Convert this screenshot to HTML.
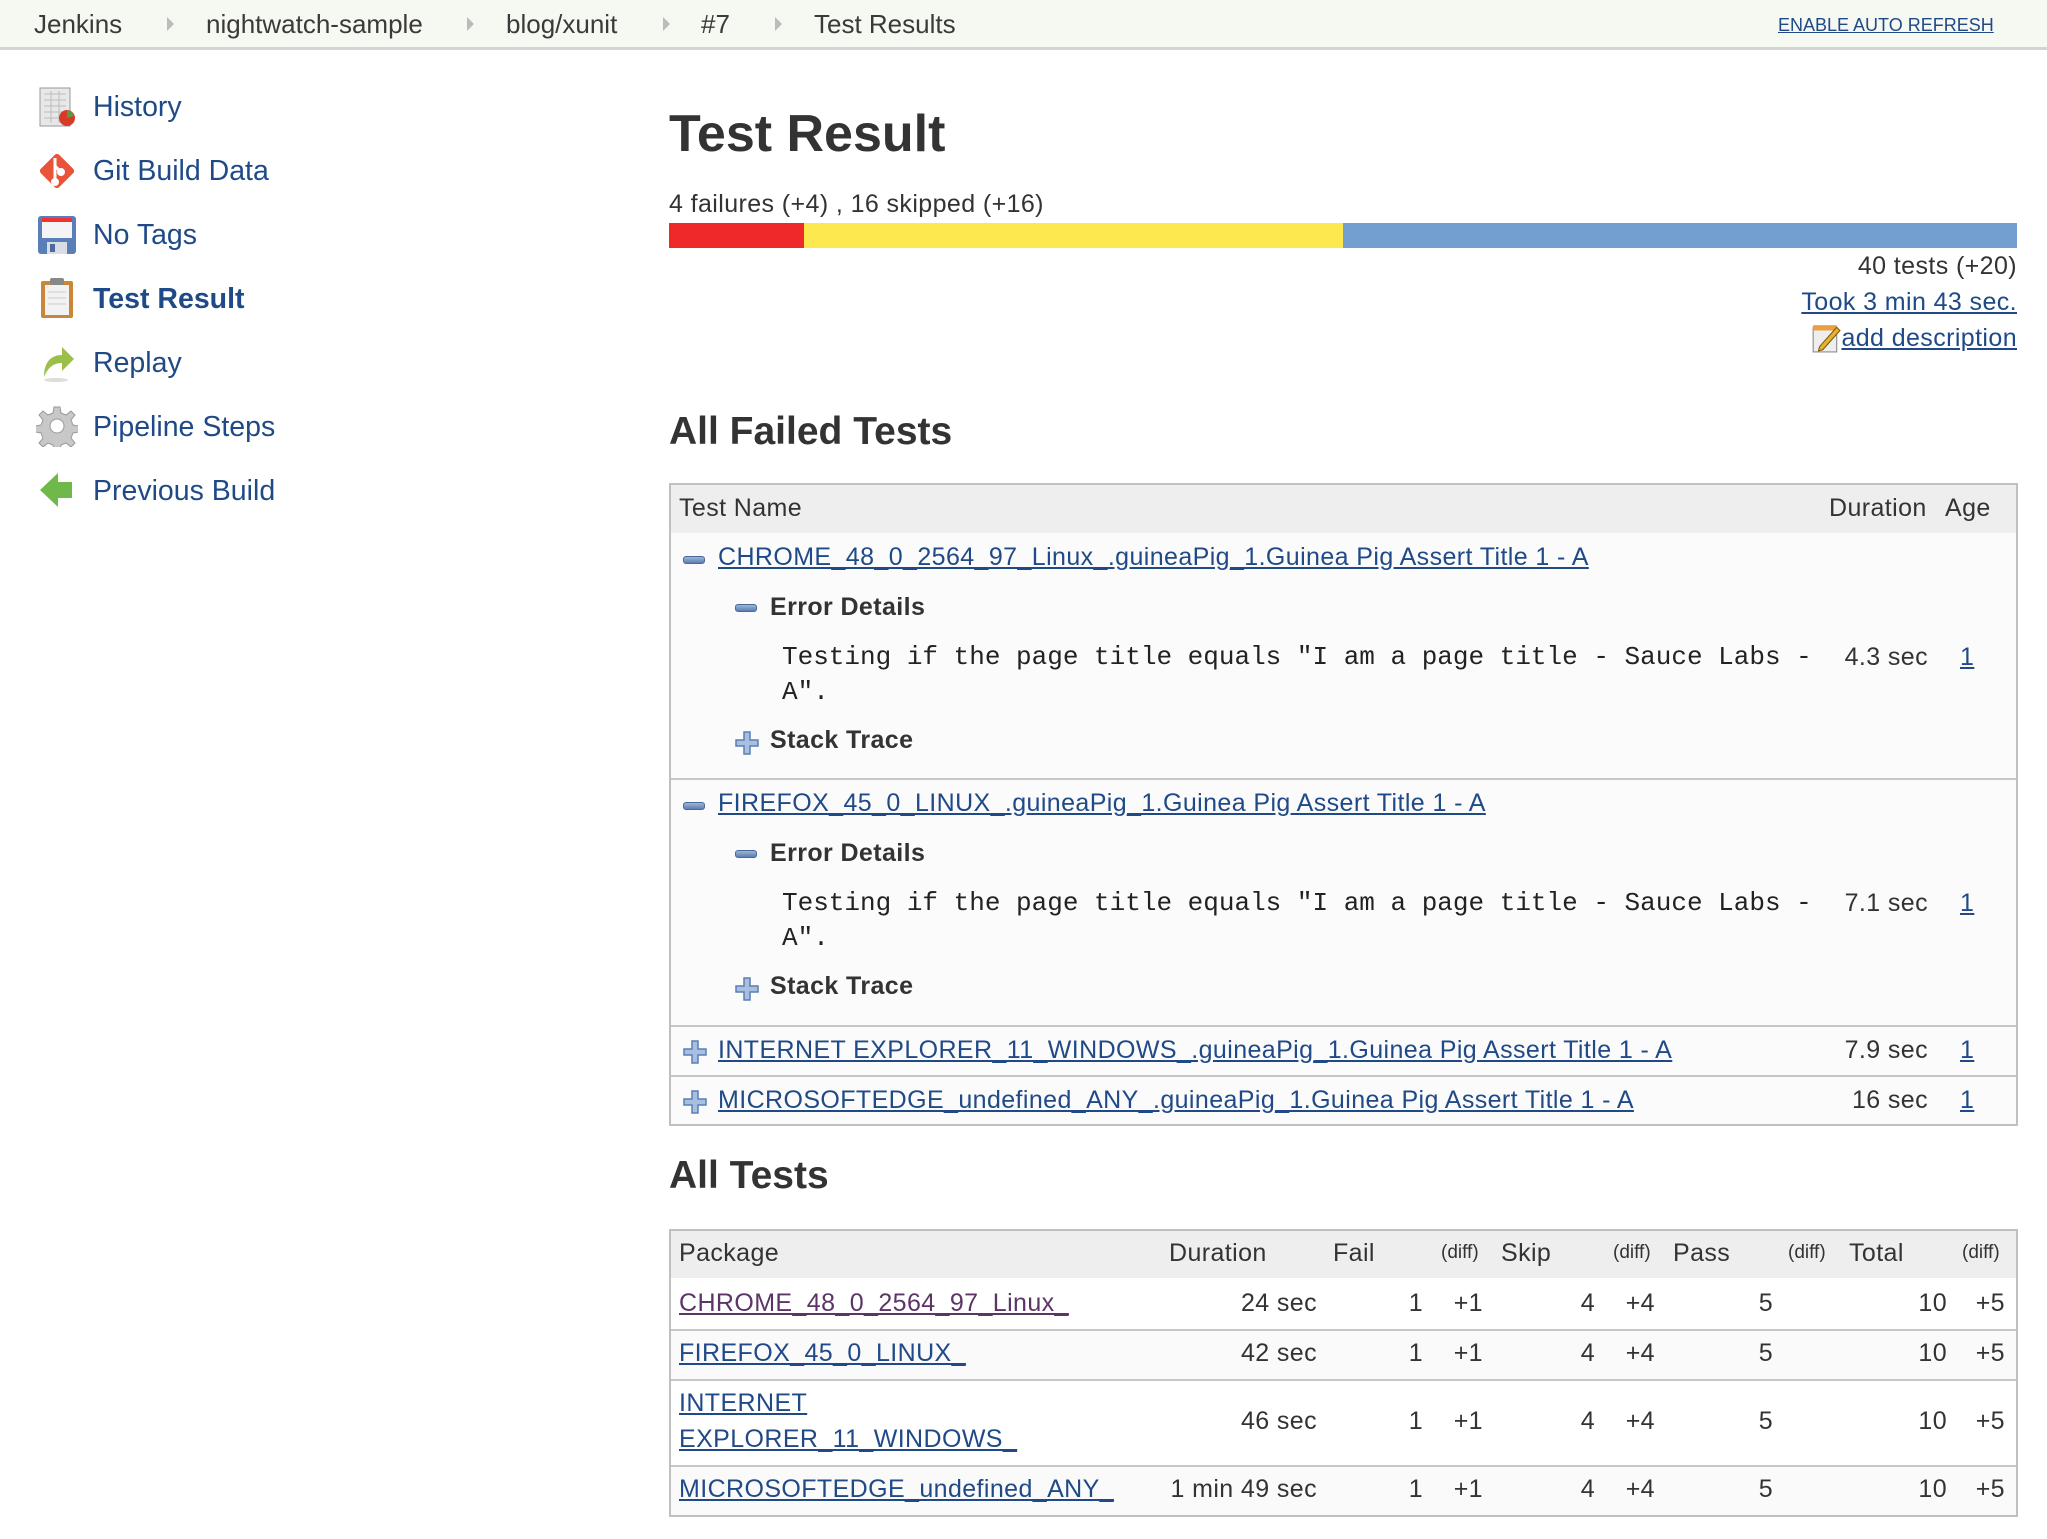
<!DOCTYPE html>
<html><head><meta charset="utf-8">
<style>
*{margin:0;padding:0;box-sizing:border-box}
body{width:2047px;height:1539px;position:relative;background:#fff;font-family:"Liberation Sans",Arial,sans-serif;color:#333;overflow:hidden}
.a{position:absolute;white-space:nowrap;line-height:30px}
a,.l{color:#204a87;text-decoration:underline}
.bc{position:absolute;left:0;top:0;width:2047px;height:50px;background:#f6f8f2;border-bottom:3px solid #d3d5d0}
.bc span{position:absolute;top:9px;font-size:26px;color:#3a3a3a;line-height:30px}
.tri{position:absolute;top:17px;width:0;height:0;border-left:7px solid #bbb;border-top:7px solid transparent;border-bottom:7px solid transparent}
.side{font-size:28.5px;color:#204a87;text-decoration:none}
.ico{position:absolute;left:36px;width:42px;height:42px}
.t{font-size:25px;letter-spacing:0.4px}
.r{text-align:right}
.box{position:absolute;border:2px solid #c0c0c0;background:#fbfbfb}
.hd{position:absolute;background:#eeeeee}
.hl{position:absolute;height:2px;background:#c6c6c6}
.mono{font-family:"Liberation Mono","Courier New",monospace;font-size:26px;letter-spacing:0;color:#222}
.b{font-weight:bold}
.minus{position:absolute;width:22px;height:8px;border-radius:3px;background:linear-gradient(#9fb4d4,#5b7fb5);border:1px solid #4a6a9a}
.plus{position:absolute;width:24px;height:24px}
</style></head><body>
<div class="bc">
<span style="left:34px">Jenkins</span><div class="tri" style="left:167px"></div>
<span style="left:206px">nightwatch-sample</span><div class="tri" style="left:467px"></div>
<span style="left:506px">blog/xunit</span><div class="tri" style="left:663px"></div>
<span style="left:701px">#7</span><div class="tri" style="left:775px"></div>
<span style="left:814px">Test Results</span>
<a class="a" style="left:1778px;top:10px;font-size:18px">ENABLE AUTO REFRESH</a>
</div>

<!-- sidebar -->
<svg class="ico" style="top:86px" viewBox="0 0 42 42"><rect x="4" y="2" width="30" height="38" fill="#e8e8e8" stroke="#999"/><g stroke="#bbb"><line x1="8" y1="8" x2="30" y2="8"/><line x1="8" y1="14" x2="30" y2="14"/><line x1="8" y1="20" x2="30" y2="20"/><line x1="8" y1="26" x2="30" y2="26"/><line x1="8" y1="32" x2="30" y2="32"/><line x1="15" y1="5" x2="15" y2="37"/><line x1="23" y1="5" x2="23" y2="37"/></g><circle cx="31" cy="32" r="8" fill="#d83a2a"/><path d="M31 32 L31 24 A8 8 0 0 1 38 30Z" fill="#5a9a3a"/></svg>
<div class="a side" style="left:93px;top:92px">History</div>
<svg class="ico" style="top:150px" viewBox="0 0 42 42"><rect x="8" y="8" width="26" height="26" transform="rotate(45 21 21)" fill="#e8533a" rx="3"/><g stroke="#fff" stroke-width="3" fill="#fff"><line x1="19" y1="8" x2="19" y2="32"/><line x1="19" y1="16" x2="25" y2="22"/><circle cx="19" cy="32" r="2.5"/><circle cx="25" cy="22" r="2.5"/></g></svg>
<div class="a side" style="left:93px;top:156px">Git Build Data</div>
<svg class="ico" style="top:214px" viewBox="0 0 42 42"><rect x="2" y="2" width="38" height="38" rx="3" fill="#5a7fb8"/><rect x="6" y="4" width="30" height="20" fill="#f4f4f4"/><rect x="6" y="4" width="30" height="4" fill="#e33"/><rect x="11" y="28" width="20" height="12" fill="#d8dde6"/><rect x="14" y="30" width="5" height="8" fill="#4a6aa0"/></svg>
<div class="a side" style="left:93px;top:220px">No Tags</div>
<svg class="ico" style="top:277px" viewBox="0 0 42 42"><rect x="5" y="4" width="32" height="37" rx="2" fill="#c8873a"/><rect x="9" y="8" width="24" height="30" fill="#f2f2f2"/><rect x="14" y="1" width="14" height="7" rx="2" fill="#888"/><g stroke="#ccc"><line x1="12" y1="15" x2="30" y2="15"/><line x1="12" y1="21" x2="30" y2="21"/><line x1="12" y1="27" x2="30" y2="27"/></g></svg>
<div class="a side b" style="left:93px;top:284px">Test Result</div>
<svg class="ico" style="top:341px" viewBox="0 0 42 42"><path d="M8 36 C8 20 16 14 26 14 L26 6 L38 18 L26 30 L26 22 C18 22 12 26 8 36Z" fill="#9bc04a"/><ellipse cx="20" cy="39" rx="12" ry="2" fill="#ddd"/></svg>
<div class="a side" style="left:93px;top:348px">Replay</div>
<svg class="ico" style="top:405px" viewBox="0 0 42 42"><g fill="#c8c8c8" stroke="#999"><path d="M18 2h6l1 6 5 2 5-4 4 4-4 5 2 5 6 1v6l-6 1-2 5 4 5-4 4-5-4-5 2-1 6h-6l-1-6-5-2-5 4-4-4 4-5-2-5-6-1v-6l6-1 2-5-4-5 4-4 5 4 5-2z"/></g><circle cx="21" cy="21" r="7" fill="#fff" stroke="#999"/></svg>
<div class="a side" style="left:93px;top:412px">Pipeline Steps</div>
<svg class="ico" style="top:469px" viewBox="0 0 42 42"><path d="M4 21 L22 4 L22 13 L36 13 L36 29 L22 29 L22 38Z" fill="#6fb84a"/></svg>
<div class="a side" style="left:93px;top:476px">Previous Build</div>

<!-- main -->
<div class="a b" style="left:669px;top:104px;font-size:52px;line-height:60px;color:#333">Test Result</div>
<div class="a t" style="left:669px;top:189px">4 failures (+4) , 16 skipped (+16)</div>
<div style="position:absolute;left:669px;top:223px;width:135px;height:25px;background:#ef2929"></div>
<div style="position:absolute;left:804px;top:223px;width:539px;height:25px;background:#fce94f"></div>
<div style="position:absolute;left:1343px;top:223px;width:674px;height:25px;background:#729fcf"></div>
<div class="a t r" style="right:30px;top:251px">40 tests (+20)</div>
<a class="a t" style="right:30px;top:287px">Took 3 min 43 sec.</a>
<div class="a t" style="right:30px;top:323px;display:flex;align-items:center"><svg width="30" height="30" viewBox="0 0 28 28"><rect x="2" y="4" width="22" height="23" fill="#eee" stroke="#888"/><rect x="2" y="2" width="22" height="5" fill="#e8a040"/><path d="M8 22 L24 4 L27 7 L11 25 L7 26Z" fill="#e8b030" stroke="#7a5a10"/></svg><a>add description</a></div>

<div class="a b" style="left:669px;top:410px;font-size:39px;line-height:44px">All Failed Tests</div>

<div class="box" style="left:669px;top:483px;width:1349px;height:643px"></div>
<div class="hd" style="left:671px;top:485px;width:1345px;height:48px"></div>
<div class="a t" style="left:679px;top:493px">Test Name</div>
<div class="a t" style="left:1829px;top:493px">Duration</div>
<div class="a t" style="left:1945px;top:493px">Age</div>
<div class="hl" style="left:671px;top:778px;width:1345px"></div>
<div class="hl" style="left:671px;top:1025px;width:1345px"></div>
<div class="hl" style="left:671px;top:1075px;width:1345px"></div>

<div class="minus" style="left:683px;top:556px"></div>
<a class="a t" style="left:718px;top:542px">CHROME_48_0_2564_97_Linux_.guineaPig_1.Guinea Pig Assert Title 1 - A</a>
<div class="minus" style="left:735px;top:604px"></div>
<div class="a t b" style="left:770px;top:592px">Error Details</div>
<div class="a mono" style="left:782px;top:642px">Testing if the page title equals "I am a page title - Sauce Labs -</div>
<div class="a mono" style="left:782px;top:677px">A".</div>
<div class="a t r" style="right:119px;top:642px">4.3 sec</div>
<a class="a t" style="left:1960px;top:642px">1</a>
<svg class="plus" style="left:735px;top:731px" viewBox="0 0 24 24"><path d="M9 1h6v8h8v6h-8v8H9v-8H1V9h8z" fill="#a9bfe0" stroke="#5b7fb5" stroke-width="1.5"/></svg>
<div class="a t b" style="left:770px;top:725px">Stack Trace</div>

<div class="minus" style="left:683px;top:802px"></div>
<a class="a t" style="left:718px;top:788px">FIREFOX_45_0_LINUX_.guineaPig_1.Guinea Pig Assert Title 1 - A</a>
<div class="minus" style="left:735px;top:850px"></div>
<div class="a t b" style="left:770px;top:838px">Error Details</div>
<div class="a mono" style="left:782px;top:888px">Testing if the page title equals "I am a page title - Sauce Labs -</div>
<div class="a mono" style="left:782px;top:923px">A".</div>
<div class="a t r" style="right:119px;top:888px">7.1 sec</div>
<a class="a t" style="left:1960px;top:888px">1</a>
<svg class="plus" style="left:735px;top:977px" viewBox="0 0 24 24"><path d="M9 1h6v8h8v6h-8v8H9v-8H1V9h8z" fill="#a9bfe0" stroke="#5b7fb5" stroke-width="1.5"/></svg>
<div class="a t b" style="left:770px;top:971px">Stack Trace</div>

<svg class="plus" style="left:683px;top:1040px" viewBox="0 0 24 24"><path d="M9 1h6v8h8v6h-8v8H9v-8H1V9h8z" fill="#a9bfe0" stroke="#5b7fb5" stroke-width="1.5"/></svg>
<a class="a t" style="left:718px;top:1035px">INTERNET EXPLORER_11_WINDOWS_.guineaPig_1.Guinea Pig Assert Title 1 - A</a>
<div class="a t r" style="right:119px;top:1035px">7.9 sec</div>
<a class="a t" style="left:1960px;top:1035px">1</a>
<svg class="plus" style="left:683px;top:1090px" viewBox="0 0 24 24"><path d="M9 1h6v8h8v6h-8v8H9v-8H1V9h8z" fill="#a9bfe0" stroke="#5b7fb5" stroke-width="1.5"/></svg>
<a class="a t" style="left:718px;top:1085px">MICROSOFTEDGE_undefined_ANY_.guineaPig_1.Guinea Pig Assert Title 1 - A</a>
<div class="a t r" style="right:119px;top:1085px">16 sec</div>
<a class="a t" style="left:1960px;top:1085px">1</a>

<div class="a b" style="left:669px;top:1154px;font-size:39px;line-height:44px">All Tests</div>

<div class="box" style="left:669px;top:1229px;width:1349px;height:288px;background:#fff"></div>
<div class="hd" style="left:671px;top:1231px;width:1345px;height:47px"></div>
<div style="position:absolute;left:671px;top:1330px;width:1345px;height:50px;background:#fafafa"></div>
<div style="position:absolute;left:671px;top:1466px;width:1345px;height:49px;background:#fafafa"></div>
<div class="hl" style="left:671px;top:1329px;width:1345px"></div>
<div class="hl" style="left:671px;top:1379px;width:1345px"></div>
<div class="hl" style="left:671px;top:1465px;width:1345px"></div>
<div class="a t" style="left:679px;top:1238px">Package</div>
<div class="a t" style="left:1169px;top:1238px">Duration</div>
<div class="a t" style="left:1333px;top:1238px">Fail</div>
<div class="a" style="left:1441px;top:1238px;font-size:19px">(diff)</div>
<div class="a t" style="left:1501px;top:1238px">Skip</div>
<div class="a" style="left:1613px;top:1238px;font-size:19px">(diff)</div>
<div class="a t" style="left:1673px;top:1238px">Pass</div>
<div class="a" style="left:1788px;top:1238px;font-size:19px">(diff)</div>
<div class="a t" style="left:1849px;top:1238px">Total</div>
<div class="a" style="left:1962px;top:1238px;font-size:19px">(diff)</div>

<a class="a t" style="left:679px;top:1288px;color:#5c3566">CHROME_48_0_2564_97_Linux_</a>
<a class="a t" style="left:679px;top:1338px">FIREFOX_45_0_LINUX_</a>
<a class="a t" style="left:679px;top:1388px">INTERNET</a>
<a class="a t" style="left:679px;top:1424px">EXPLORER_11_WINDOWS_</a>
<a class="a t" style="left:679px;top:1474px">MICROSOFTEDGE_undefined_ANY_</a>

<div class="a t r" style="right:730px;top:1288px">24 sec</div>
<div class="a t r" style="right:730px;top:1338px">42 sec</div>
<div class="a t r" style="right:730px;top:1406px">46 sec</div>
<div class="a t r" style="right:730px;top:1474px">1 min 49 sec</div>

<div style="position:absolute;left:0;top:1288px;width:2047px">
<div class="a t r" style="right:624px">1</div><div class="a t r" style="right:564px">+1</div>
<div class="a t r" style="right:452px">4</div><div class="a t r" style="right:392px">+4</div>
<div class="a t r" style="right:274px">5</div>
<div class="a t r" style="right:100px">10</div><div class="a t r" style="right:42px">+5</div>
</div>
<div style="position:absolute;left:0;top:1338px;width:2047px">
<div class="a t r" style="right:624px">1</div><div class="a t r" style="right:564px">+1</div>
<div class="a t r" style="right:452px">4</div><div class="a t r" style="right:392px">+4</div>
<div class="a t r" style="right:274px">5</div>
<div class="a t r" style="right:100px">10</div><div class="a t r" style="right:42px">+5</div>
</div>
<div style="position:absolute;left:0;top:1406px;width:2047px">
<div class="a t r" style="right:624px">1</div><div class="a t r" style="right:564px">+1</div>
<div class="a t r" style="right:452px">4</div><div class="a t r" style="right:392px">+4</div>
<div class="a t r" style="right:274px">5</div>
<div class="a t r" style="right:100px">10</div><div class="a t r" style="right:42px">+5</div>
</div>
<div style="position:absolute;left:0;top:1474px;width:2047px">
<div class="a t r" style="right:624px">1</div><div class="a t r" style="right:564px">+1</div>
<div class="a t r" style="right:452px">4</div><div class="a t r" style="right:392px">+4</div>
<div class="a t r" style="right:274px">5</div>
<div class="a t r" style="right:100px">10</div><div class="a t r" style="right:42px">+5</div>
</div>
</body></html>
